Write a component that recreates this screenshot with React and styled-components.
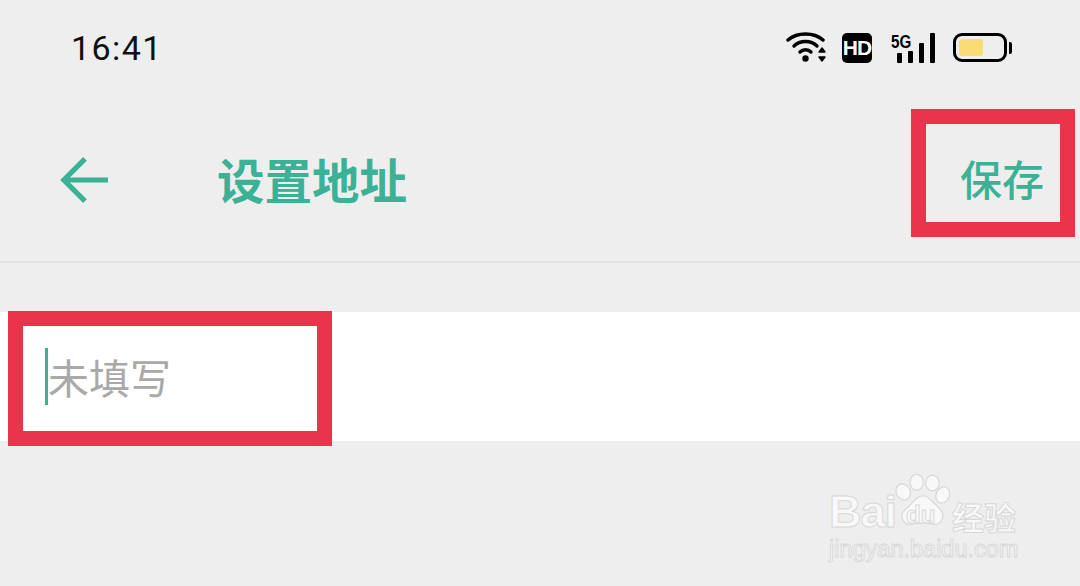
import styled, { createGlobalStyle } from "styled-components";

const CJK = `"Noto Sans CJK SC", "Noto Sans", sans-serif`;
const GREEN = "#3bb195";

const GlobalStyle = createGlobalStyle`
    html, body {
        margin: 0;
        padding: 0;
        background: #eeeeef;
    }
`;

const App = () => {
    return (
        <Page>
            <GlobalStyle />
            <StatusBar>
                <Time>16:41</Time>
                <StatusIcons>
                    <svg width="41" height="31" viewBox="0 0 41 31">
                        <g fill="none" stroke="#000" strokeLinecap="round" strokeWidth="3.4">
                            <path d="M2 8 C11 0 28 0 37 8" />
                            <path d="M8 14 C14 8 25 8 31 14" />
                            <path d="M14 20 C17 17 22 17 25 20" />
                        </g>
                        <circle cx="19.5" cy="26.5" r="3.2" fill="#000" />
                        <path d="M33 20 L36 16 L39 20 Z M33 25 L36 29 L39 25 Z" fill="#000" stroke="#000" strokeWidth="1.4" strokeLinejoin="round" />
                    </svg>
                    <HdBadge>HD</HdBadge>
                    <Signal>
                        <FiveG>5G</FiveG>
                        <Bars>
                            <Bar $h={10} />
                            <Bar $h={12} />
                            <Bar $h={20} />
                            <Bar $h={30} />
                        </Bars>
                    </Signal>
                    <Battery>
                        <BatteryBody>
                            <BatteryFill $level={57} />
                        </BatteryBody>
                        <BatteryCap />
                    </Battery>
                </StatusIcons>
            </StatusBar>

            <Header>
                <BackButton>
                    <svg width="48" height="48" viewBox="0 0 50 50">
                        <path d="M26 3 L4 25 L26 47 M4 25 L50 25" fill="none" stroke={GREEN} strokeWidth="5.4" />
                    </svg>
                </BackButton>
                <Title>设置地址</Title>
                <SaveButton>保存</SaveButton>
            </Header>

            <FieldRow>
                <Caret />
                <Placeholder>未填写</Placeholder>
            </FieldRow>

            <Marker $left={911} $top={109} $width={164} $height={128} />
            <Marker $left={8} $top={311} $width={324} $height={135} />

            <Watermark>
                <LogoRow>
                    <BaiText>Bai</BaiText>
                    <Paw>
                        <svg width="60" height="54" viewBox="0 0 76 72" preserveAspectRatio="none">
                            <g fill="#f8f8f8" stroke="#d8d8d8" strokeWidth="1.6">
                                <ellipse cx="13" cy="24" rx="9" ry="11" transform="rotate(-25 13 24)" />
                                <ellipse cx="30" cy="11" rx="8.5" ry="10.5" />
                                <ellipse cx="50" cy="12" rx="8.5" ry="10.5" />
                                <ellipse cx="63" cy="28" rx="8.5" ry="11" transform="rotate(20 63 28)" />
                                <path d="M38 29 C46 29 50 38 58 45 C68 54 62 69 50 67 C42 65 34 65 26 67 C12 69 6 55 17 46 C26 39 29 29 38 29 Z" />
                            </g>
                        </svg>
                        <DuText>du</DuText>
                    </Paw>
                    <JingYan>经验</JingYan>
                </LogoRow>
                <Url>jingyan.baidu.com</Url>
            </Watermark>
        </Page>
    );
};

const Page = styled.div`
    position: relative;
    width: 1080px;
    height: 586px;
    overflow: hidden;
    background: #eeeeef;
    display: flex;
    flex-direction: column;
`;

const StatusBar = styled.div`
    height: 95px;
    flex-shrink: 0;
    display: flex;
    align-items: center;
    justify-content: space-between;
    padding: 0 68px 0 71px;
    box-sizing: border-box;
`;

const Time = styled.span`
    font: 400 34px/1 Roboto, sans-serif;
    letter-spacing: 1.4px;
    color: #111;
`;

const StatusIcons = styled.div`
    display: flex;
    align-items: center;
    gap: 16px;
`;

const HdBadge = styled.span`
    width: 30px;
    height: 30px;
    border-radius: 5px;
    background: #000;
    color: #fff;
    display: flex;
    align-items: center;
    justify-content: center;
    font: 700 21px/1 "Liberation Sans", sans-serif;
    letter-spacing: -1px;
    margin-left: -1px;
`;

const Signal = styled.div`
    position: relative;
    width: 44px;
    height: 30px;
    margin-left: 3px;
    display: flex;
    align-items: flex-end;
    justify-content: flex-end;
`;

const FiveG = styled.span`
    position: absolute;
    left: 0;
    top: -1px;
    font: 700 19px/1 "Liberation Sans", sans-serif;
    transform: scaleX(0.8);
    transform-origin: left;
    color: #000;
`;

const Bars = styled.div`
    display: flex;
    align-items: flex-end;
    gap: 6px;
`;

const Bar = styled.span`
    width: 5px;
    height: ${(p) => p.$h}px;
    background: #000;
    border-radius: 1px;
`;

const Battery = styled.div`
    display: flex;
    align-items: center;
    gap: 2px;
    margin-left: 2px;
`;

const BatteryBody = styled.div`
    width: 54px;
    height: 29px;
    box-sizing: border-box;
    border: 3px solid #000;
    border-radius: 9px;
    padding: 3px;
    display: flex;
`;

const BatteryFill = styled.div`
    width: ${(p) => p.$level}%;
    background: #fbdc74;
    border-radius: 3px;
`;

const BatteryCap = styled.span`
    width: 3px;
    height: 12px;
    background: #000;
    border-radius: 0 2px 2px 0;
`;

const Header = styled.div`
    height: 168px;
    flex-shrink: 0;
    box-sizing: border-box;
    border-bottom: 2px solid #e5e5e5;
    display: flex;
    align-items: center;
    padding: 0 36px 0 60px;
`;

const BackButton = styled.div`
    display: flex;
    width: 48px;
    margin: 3px 109px 0 0;
`;

const Title = styled.h1`
    margin: 2px 0 0;
    font: 700 47.5px/1 ${CJK};
    color: ${GREEN};
`;

const SaveButton = styled.button`
    margin-left: auto;
    padding: 0;
    border: none;
    background: transparent;
    font: 500 42px/1 ${CJK};
    color: ${GREEN};
`;

const FieldRow = styled.div`
    margin-top: 49px;
    height: 129px;
    flex-shrink: 0;
    background: #fff;
    display: flex;
    align-items: center;
    padding-left: 45px;
`;

const Caret = styled.span`
    width: 3px;
    height: 57px;
    background: ${GREEN};
`;

const Placeholder = styled.span`
    font: 400 41px/1 ${CJK};
    color: #a9a9a9;
`;

const Marker = styled.div`
    position: absolute;
    left: ${(p) => p.$left}px;
    top: ${(p) => p.$top}px;
    width: ${(p) => p.$width}px;
    height: ${(p) => p.$height}px;
    box-sizing: border-box;
    border: 15px solid #ea344b;
`;

const Watermark = styled.div`
    position: absolute;
    left: 829px;
    top: 472px;
    width: 195px;
    display: flex;
    flex-direction: column;
    color: #f8f8f8;
    -webkit-text-stroke: 1px #d8d8d8;
`;

const LogoRow = styled.div`
    display: flex;
    align-items: flex-end;
    height: 62px;
`;

const BaiText = styled.span`
    width: 64px;
    flex-shrink: 0;
    font: 700 45px/1 "Liberation Sans", sans-serif;
    letter-spacing: -1px;
`;

const Paw = styled.div`
    position: relative;
    width: 60px;
    height: 54px;
    margin-bottom: 6px;
    flex-shrink: 0;
`;

const DuText = styled.span`
    position: absolute;
    left: 13px;
    top: 29px;
    font: 700 24px/1 "Liberation Sans", sans-serif;
`;

const JingYan = styled.span`
    font: 700 32px/1 ${CJK};
    margin-left: -1px;
    margin-bottom: 2px;
    white-space: nowrap;
`;

const Url = styled.span`
    font: 400 23.5px/1 "Liberation Sans", sans-serif;
    margin-top: 4px;
    white-space: nowrap;
`;

export default App;
